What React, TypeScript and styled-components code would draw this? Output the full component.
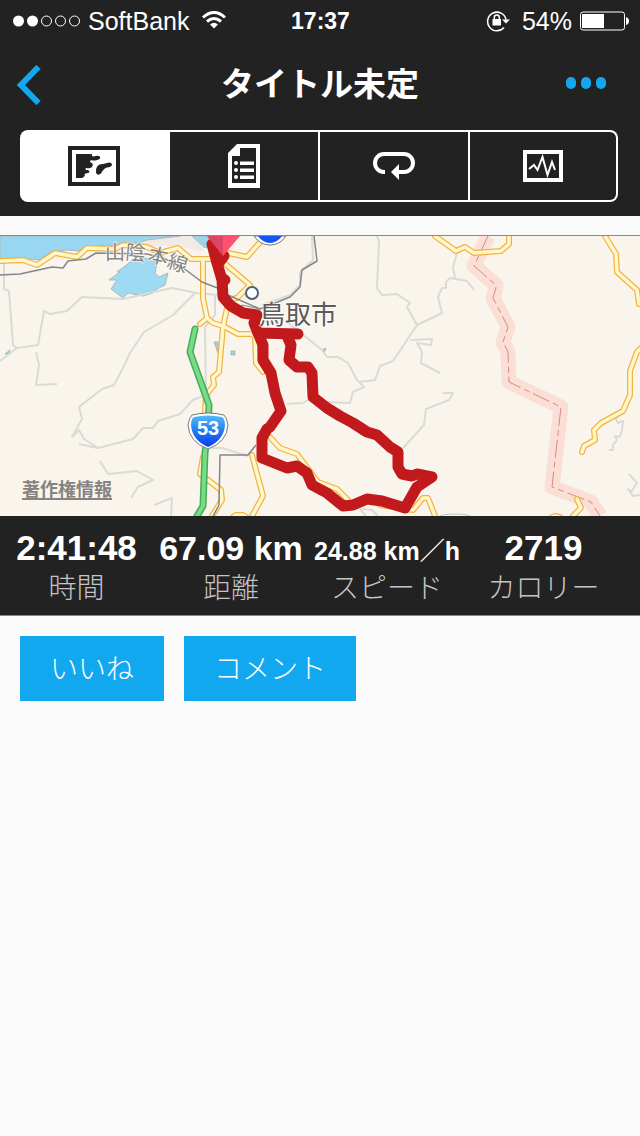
import React from "react";
import styled, { createGlobalStyle } from "styled-components";

const ink = "#222222";
const accent = "#12a8ef";
const latin = '"Liberation Sans", "Noto Sans CJK JP", sans-serif';
const japanese = '"Noto Sans CJK JP", sans-serif';

const GlobalStyle = createGlobalStyle`
  *, *::before, *::after { box-sizing: border-box; }
  body { margin: 0; background: #fafafa; font-family: ${latin}; }
  button { font: inherit; border: 0; margin: 0; padding: 0; cursor: pointer; }
  svg { display: block; }
`;

const Page = styled.div`
  min-height: 100vh;
  background: #fafafa;
`;

const Header = styled.header`
  background: ${ink};
  color: #fff;
  padding-bottom: 14px;
`;

const StatusBar = styled.div`
  display: grid;
  grid-template-columns: 1fr auto 1fr;
  align-items: center;
  height: 42px;
  padding: 0 11px 0 12px;
  font-size: 25px;
  line-height: 42px;
`;

const StatusGroup = styled.div<{ $end?: boolean }>`
  display: flex;
  align-items: center;
  justify-content: ${(p) => (p.$end ? "flex-end" : "flex-start")};
  gap: 8px;
`;

const Clock = styled.time`
  font-size: 23px;
  font-weight: 700;
`;

const TitleBar = styled.div`
  display: grid;
  grid-template-columns: 80px 1fr 80px;
  align-items: center;
  height: 88px;
`;

const BarButton = styled.button<{ $end?: boolean }>`
  display: flex;
  align-items: center;
  justify-content: ${(p) => (p.$end ? "flex-end" : "flex-start")};
  height: 88px;
  padding: ${(p) => (p.$end ? "0 33px 6px 0" : "0 0 2px 16px")};
  background: transparent;
  color: ${accent};
`;

const Title = styled.h1`
  margin: 0;
  text-align: center;
  font-family: ${japanese};
  font-size: 33px;
  line-height: 48px;
  padding-bottom: 8px;
  font-weight: 700;
`;

const Tabs = styled.nav`
  display: grid;
  grid-template-columns: 150fr 150fr 150fr 148fr;
  margin: 0 22px 0 20px;
`;

const Tab = styled.button<{ $active?: boolean }>`
  display: flex;
  align-items: center;
  justify-content: center;
  height: 72px;
  border: 2px solid #fff;
  border-left-width: 0;
  background: ${(p) => (p.$active ? "#fff" : ink)};
  color: ${(p) => (p.$active ? ink : "#fff")};
  &:first-child { border-radius: 8px 0 0 8px; }
  &:last-child { border-radius: 0 8px 8px 0; }
`;

const MapPanel = styled.section`
  position: relative;
  margin-top: 19px;
  border-top: 1px solid #8a888c;
  background: #f9f5ed;
`;

const MapSvg = styled.svg`
  width: 100%;
  height: 280px;
`;

const LegalLink = styled.a`
  position: absolute;
  left: 22px;
  bottom: 15px;
  font-family: ${japanese};
  font-size: 18px;
  line-height: 26px;
  font-weight: 700;
  color: #858381;
  text-underline-offset: 2px;
  text-decoration-thickness: 2px;
`;

const Stats = styled.dl`
  display: grid;
  grid-template-columns: 153fr 156fr 156fr 157fr;
  margin: 0;
  padding: 12px 18px 12px 0;
  background: ${ink};
  border-bottom: 1px solid #858585;
`;

const Stat = styled.div`
  display: flex;
  flex-direction: column-reverse;
  align-items: center;
  white-space: nowrap;
  min-width: 0;
`;

const StatLabel = styled.dt`
  font-family: ${japanese};
  font-size: 28px;
  line-height: 34px;
  font-weight: 300;
  color: #c4c4c4;
`;

const StatValue = styled.dd<{ $size: number }>`
  margin: 0;
  height: 41px;
  font-size: ${(p) => p.$size}px;
  line-height: ${(p) => (p.$size < 30 ? 46 : 40)}px;
  font-weight: 700;
  color: #fff;
`;

const Actions = styled.div`
  display: flex;
  gap: 20px;
  padding: 20px;
`;

const ActionButton = styled.button`
  height: 65px;
  && { padding: 0 30px 4px; }
  background: ${accent};
  color: #fff;
  font-family: ${japanese};
  font-size: 28px;
  font-weight: 300;
  line-height: 60px;
`;

const minorRoads = [
  "4,262 4,289 9,291 13,345 17,348 38,345 44,311 50,314 67,311 82,297 123,299 172,288 197,293 217,295",
  "0,361 17,348",
  "195,293 173,315 144,332 130,353 122,370 114,385 102,389 79,407 82,419 72,437 79,430 84,439 98,448",
  "79,444 98,448 133,439 143,428 153,428 158,421 180,414 193,400 203,396",
  "36,352 39,365 36,385 57,384",
  "100,461 108,474 137,471 153,480 138,487 131,498",
  "154,505 172,498 171,516",
  "215,295 215,315 205,327 206,395",
  "312,236 313,260 300,272 300,285 290,295 262,305",
  "377,236 379,242 377,288 382,295 397,294 410,303 407,307 417,325 393,361 380,366 375,380 360,382",
  "287,322 322,350 327,357 338,357 348,363 357,380 364,387 353,392 350,403 327,402",
  "310,399 303,403 287,404",
  "443,393 453,393 449,400 426,409 424,425 403,448",
  "410,340 432,339 431,345 417,343 422,352 421,363 440,373",
  "417,325 442,313 438,297 442,288 446,288 446,282 450,278 467,281 474,290",
  "455,278 453,267 457,253",
  "615,417 618,423 623,421 622,430 620,437 615,436 617,440 613,445 613,450 609,450",
  "629,474 637,483 631,492 628,489 633,496 640,495",
  "208,448 222,448 248,456",
  "360,509 366,516",
  "362,509 372,510 378,516",
];

const mainRoads = [
  "0,261 23,260 37,265 55,253 77,257 87,248 115,249 123,245 147,247 160,253 178,248 191,259 212,259",
  "203,259 203,298 207,318 213,323 223,326 238,334 252,334 255,337 256,363 263,372",
  "200,324 207,318",
  "228,253 247,257 262,240",
  "223,262 250,285 237,298 228,300 227,308 223,327 219,372 213,377 214,385 206,395 205,413",
  "203,457 200,474 221,490 222,500 212,516",
  "252,455 263,496 252,516",
  "233,517 236,515 243,515 246,517",
  "268,435 280,448 297,454 318,482 337,489 348,500",
  "380,505 413,510 423,498 428,498 435,516",
  "435,236 456,251 465,247 474,253 501,251 509,244 509,236",
  "605,236 616,254 617,272 637,290 639,304",
  "642,347 637,352 630,371 630,395 623,411 601,423 594,430 595,440 584,446 582,452",
  "577,499 581,508 573,516",
  "552,517 555,516 560,517",
];

const railways = [
  "0,275 20,274 52,267 63,268 68,261 86,259 96,253 147,254 163,258 182,267 202,282 220,289 228,295 260,309 290,297 300,287 302,270 317,261 314,236",
  "256,445 248,455 220,455 219,505 213,516",
];

const border =
  "488,236 474,266 496,285 496,288 493,298 508,327 503,342 508,352 509,382 561,407 552,487 591,502 600,516";

const highway = "195,329 190,352 209,405 208,430 205,453 203,506 197,516";

const track = [
  "212,244 217,263 222,280 223,297 231,306 243,313 257,315 254,323 258,333 298,334",
  "218,264 224,256",
  "222,278 225,280",
  "258,333 263,345 263,360 271,373 275,393 281,411 270,427 267,429 262,438 262,458 287,468 297,466 307,473 312,485 327,493 343,506 353,505 367,499 382,501 405,508 417,487 432,477 417,474 412,476 402,474 398,467 398,452 390,447 377,435 367,432 353,423 340,416 327,408 313,397 312,373 308,367 297,367 289,360 291,345 288,338",
];

const RideMap = () => (
  <MapSvg viewBox="0 236 640 280" preserveAspectRatio="xMidYMid slice" role="img" aria-label="ルート地図">
    <defs>
      <linearGradient id="shield" x1="0" y1="0" x2="0" y2="1">
        <stop offset="0" stopColor="#55b8fa" />
        <stop offset="0.45" stopColor="#2580f6" />
        <stop offset="1" stopColor="#063df2" />
      </linearGradient>
    </defs>
    <rect y="236" width="640" height="280" fill="#f9f5ed" />
    <path d="M110 246L147 239L170 236H205L203 252L178 246L147 246Z" fill="#f4eae5" />
    <path
      d="M0 236H180L147 240L138 243L123 243L110 246L87 247L78 251L67 250L50 252L40 260L20 258L0 259ZM192 236H208L210 246L205 248Z"
      fill="#98d6f1"
      stroke="#a9b9be"
    />
    <path
      d="M147 258L133 260L117 272L120 272L109 280L117 280L111 289L123 298L128 293L143 296L153 293L157 289L165 285L168 273L159 277L155 273L157 263Z"
      fill="#9fdaf3"
      stroke="#a9b9be"
    />
    <path d="M214 342H218V353ZM231 351H235V355H231ZM5 354L10 350L9 354ZM322 350L326 348L324 353Z" fill="#9bd2e5" stroke="#aab9bd" />
    <g fill="none" strokeLinejoin="round">
      {minorRoads.map((p) => (
        <polyline key={p} points={p} stroke="#dadbd5" strokeWidth="2" />
      ))}
      <ellipse cx="455" cy="517" rx="16" ry="3" stroke="#c4c4c0" strokeWidth="1" />
      <polyline points={border} stroke="#fbdfd7" strokeWidth="15" />
      <polyline points={border} stroke="#d58c7e" strokeWidth="1" strokeDasharray="18 4 6 4" />
      {mainRoads.map((p) => (
        <polyline key={p} points={p} stroke="#f4b23f" strokeWidth="6" strokeLinecap="round" />
      ))}
      {mainRoads.map((p) => (
        <polyline key={p} points={p} stroke="#fff8cf" strokeWidth="3.500" strokeLinecap="round" />
      ))}
      {railways.map((p) => (
        <polyline key={p} points={p} stroke="#85858c" strokeWidth="1.500" />
      ))}
      <polyline points="242,311 242,305 260,309" stroke="#85858c" />
      <polyline points={highway} stroke="#3fae5e" strokeWidth="7" strokeLinecap="round" />
      <polyline points={highway} stroke="#7cda85" strokeWidth="4" strokeLinecap="round" />
    </g>
    <circle cx="252" cy="293" r="6" fill="#fff" stroke="#4d6379" strokeWidth="2" />
    <path d="M254 236H286Q280 245 270 245Q260 245 254 236Z" fill="#fff" stroke="#777" />
    <path d="M258 236H282Q277 243 270 243Q263 243 258 236Z" fill="#1255f0" />
    <g fill="none" stroke="#c2191c" strokeWidth="11" strokeLinecap="round" strokeLinejoin="round">
      {track.map((p) => (
        <polyline key={p} points={p} />
      ))}
    </g>
    <path d="M207 236H223V256Z" fill="#dc4563" />
    <path d="M223 236H240L223 256Z" fill="#ff5270" />
    <path
      d="M192 415Q208 411 224 415Q227 418 228 425Q227 442 208 449Q189 442 188 425Q189 418 192 415Z"
      fill="#fff"
      stroke="#77777a"
    />
    <path d="M194 417Q208 414 222 417Q225 419 225 425Q224 440 208 447Q192 440 191 425Q191 419 194 417Z" fill="url(#shield)" />
    <text x="208" y="435" textAnchor="middle" fontFamily={latin} fontSize="20" fontWeight="700" fill="#fff">
      53
    </text>
    <g fontFamily={japanese} stroke="#fff" strokeOpacity="0.6" strokeWidth="2" paintOrder="stroke">
      <text x="105 125 147 166" y="260 259 261 267" rotate="0 5 12 17" fontSize="20" fill="#858585">
        山陰本線
      </text>
      <text x="259" y="324" fontSize="26" fill="#5b5b5b">
        鳥取市
      </text>
    </g>
  </MapSvg>
);

const Signal = () => (
  <svg width="68" height="14" viewBox="0 0 68 14" aria-hidden="true">
    <circle cx="6.500" cy="7" r="5.500" fill="#fff" />
    <circle cx="20.500" cy="7" r="5.500" fill="#fff" />
    {[34.5, 48.5, 62.5].map((x) => (
      <circle key={x} cx={x} cy="7" r="5" fill="none" stroke="#fff" />
    ))}
  </svg>
);

const Wifi = () => (
  <svg width="30" height="20" viewBox="-4 1 30 20" fill="none" stroke="#fff" strokeWidth="3" aria-hidden="true">
    <path d="M2 7.500Q13 -2.500 24 7.500" />
    <path d="M6 11.500Q13 5.500 20 11.500" />
    <path d="M9 14.500Q13 11 17 14.500L13 18.500Z" fill="#fff" stroke="none" />
  </svg>
);

const RotationLock = () => (
  <svg width="28" height="22" viewBox="0 0 28 22" aria-hidden="true">
    <path d="M18 17.500A9.300 9.300 0 1 1 20 9.500" fill="none" stroke="#fff" strokeWidth="1.500" />
    <path d="M16 9.500H24L20 13.500Z" fill="#fff" />
    <rect x="6.500" y="9" width="8.500" height="6.500" fill="#fff" />
    <path d="M8.300 9V7.500a2.500 2.500 0 0 1 5 0V9" fill="none" stroke="#fff" strokeWidth="1.500" />
  </svg>
);

const Battery = () => (
  <svg width="49" height="20" viewBox="0 0 49 20" aria-hidden="true">
    <rect x="0.500" y="1" width="44" height="18" rx="2.500" fill="none" stroke="#fff" />
    <rect x="2" y="3" width="22" height="14" fill="#fff" />
    <path d="M46 6Q49 7 49 10Q49 13 46 14Z" fill="#fff" />
  </svg>
);

const MapIcon = () => (
  <svg width="52" height="40" viewBox="0 0 52 40" aria-hidden="true">
    <rect x="2" y="2" width="48" height="36" fill="none" stroke="currentColor" strokeWidth="4" />
    <path
      d="M8 8H24Q23 10 26 10.500Q29 9 32 10.500Q33 13 29 14Q26 15 23 14Q21 16 23 16.500Q26 18 24 21Q22 23 18 22Q16 24 20 24Q23 26 20 27Q15 28 17 29Q16 32 14 32H8Z"
      fill="currentColor"
    />
    <path d="M28 27Q27 18 35 18L41 16.500Q44 16.500 44 19Q43 21 39 21.500Q36 22 33 27.500Q30 30 28 27Z" fill="currentColor" />
  </svg>
);

const ReportIcon = () => (
  <svg width="32" height="44" viewBox="0 0 32 44" fill="currentColor" aria-hidden="true">
    <path fillRule="evenodd" d="M9 0H32V44H0V9ZM12 4V12H4V39H28V4Z" />
    {[19, 26, 33].map((y) => (
      <g key={y}>
        <circle cx="8" cy={y} r="2" />
        <rect x="12" y={y - 1.5} width="14" height="3.500" />
      </g>
    ))}
  </svg>
);

const LapIcon = () => (
  <svg width="42" height="32" viewBox="0 0 42 32" fill="none" aria-hidden="true">
    <path d="M12 22H11a9 9 0 0 1 0-18H31a9 9 0 0 1 0 18H25" stroke="currentColor" strokeWidth="4" />
    <path d="M18 22L26 14V30Z" fill="currentColor" />
  </svg>
);

const GraphIcon = () => (
  <svg width="40" height="32" viewBox="0 0 40 32" fill="none" stroke="currentColor" aria-hidden="true">
    <rect x="2" y="2" width="36" height="28" strokeWidth="4" />
    <path d="M6 19L11 15L14.500 20L19.500 7L24.500 25L29 12L32 20" strokeWidth="2" />
  </svg>
);

const tabs = [
  { label: "地図", icon: <MapIcon /> },
  { label: "詳細", icon: <ReportIcon /> },
  { label: "ラップ", icon: <LapIcon /> },
  { label: "グラフ", icon: <GraphIcon /> },
];

const stats = [
  { label: "時間", value: "2:41:48", size: 35 },
  { label: "距離", value: "67.09 km", size: 34 },
  { label: "スピード", value: "24.88 km／h", size: 25 },
  { label: "カロリー", value: "2719", size: 35 },
];

export default function App() {
  return (
    <>
      <GlobalStyle />
      <Page>
        <Header>
          <StatusBar>
            <StatusGroup>
              <Signal />
              <span>SoftBank</span>
              <Wifi />
            </StatusGroup>
            <Clock>17:37</Clock>
            <StatusGroup $end>
              <RotationLock />
              <span>54%</span>
              <Battery />
            </StatusGroup>
          </StatusBar>
          <TitleBar>
            <BarButton aria-label="戻る">
              <svg width="26" height="40" viewBox="0 0 26 40" fill="none" stroke="currentColor" strokeWidth="6">
                <path d="M22.500 2L5 20L22.500 38" />
              </svg>
            </BarButton>
            <Title>タイトル未定</Title>
            <BarButton $end aria-label="メニュー">
              <svg width="42" height="14" viewBox="0 0 42 14" fill="currentColor">
                <rect x="1" y="1" width="10" height="12" rx="5" />
                <rect x="16" y="1" width="10" height="12" rx="5" />
                <rect x="31" y="1" width="10" height="12" rx="5" />
              </svg>
            </BarButton>
          </TitleBar>
          <Tabs>
            {tabs.map((t, i) => (
              <Tab key={t.label} $active={i === 0} aria-label={t.label} aria-pressed={i === 0}>
                {t.icon}
              </Tab>
            ))}
          </Tabs>
        </Header>
        <main>
          <MapPanel>
            <RideMap />
            <LegalLink href="#legal">著作権情報</LegalLink>
          </MapPanel>
          <Stats>
            {stats.map((s) => (
              <Stat key={s.label}>
                <StatLabel>{s.label}</StatLabel>
                <StatValue $size={s.size}>{s.value}</StatValue>
              </Stat>
            ))}
          </Stats>
          <Actions>
            <ActionButton>いいね</ActionButton>
            <ActionButton>コメント</ActionButton>
          </Actions>
        </main>
      </Page>
    </>
  );
}
